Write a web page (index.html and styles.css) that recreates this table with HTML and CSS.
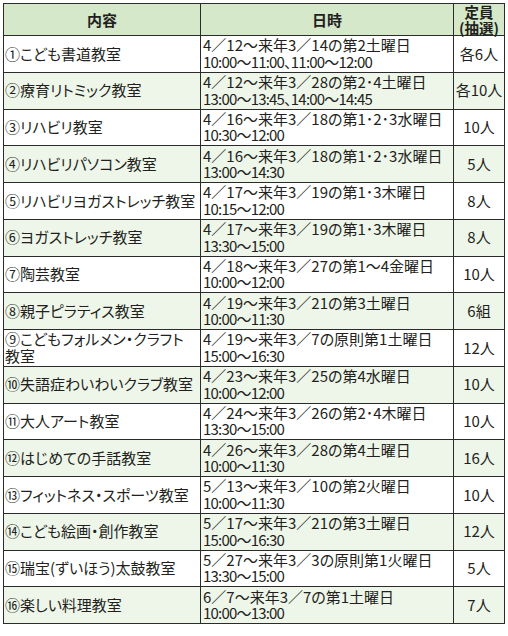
FILE: index.html
```html
<!DOCTYPE html>
<html lang="ja">
<head>
<meta charset="utf-8">
<link rel="stylesheet" href="styles.css">
</head>
<body>
<table class="sched">
  <colgroup>
    <col class="c-name">
    <col class="c-date">
    <col class="c-cap">
  </colgroup>
  <thead>
    <tr>
      <th>内容</th>
      <th>日時</th>
      <th class="cap-h">定員<br>(抽選)</th>
    </tr>
  </thead>
  <tbody>
    <tr><td class="name">①こども書道教室</td><td class="date">4／12～来年3／14の第2土曜日<br><span class="time">10:00～11:00、11:00～12:00</span></td><td class="cap">各6人</td></tr>
    <tr class="alt"><td class="name">②療育リトミック教室</td><td class="date">4／12～来年3／28の第2･4土曜日<br><span class="time">13:00～13:45、14:00～14:45</span></td><td class="cap">各10人</td></tr>
    <tr><td class="name">③リハビリ教室</td><td class="date">4／16～来年3／18の第1･2･3水曜日<br><span class="time">10:30～12:00</span></td><td class="cap">10人</td></tr>
    <tr class="alt"><td class="name">④リハビリパソコン教室</td><td class="date">4／16～来年3／18の第1･2･3水曜日<br><span class="time">13:00～14:30</span></td><td class="cap">5人</td></tr>
    <tr><td class="name">⑤リハビリヨガストレッチ教室</td><td class="date">4／17～来年3／19の第1･3木曜日<br><span class="time">10:15～12:00</span></td><td class="cap">8人</td></tr>
    <tr class="alt"><td class="name">⑥ヨガストレッチ教室</td><td class="date">4／17～来年3／19の第1･3木曜日<br><span class="time">13:30～15:00</span></td><td class="cap">8人</td></tr>
    <tr><td class="name">⑦陶芸教室</td><td class="date">4／18～来年3／27の第1～4金曜日<br><span class="time">10:00～12:00</span></td><td class="cap">10人</td></tr>
    <tr class="alt"><td class="name">⑧親子ピラティス教室</td><td class="date">4／19～来年3／21の第3土曜日<br><span class="time">10:00～11:30</span></td><td class="cap">6組</td></tr>
    <tr><td class="name">⑨こどもフォルメン・クラフト<br>教室</td><td class="date">4／19～来年3／7の原則第1土曜日<br><span class="time">15:00～16:30</span></td><td class="cap">12人</td></tr>
    <tr class="alt"><td class="name">⑩失語症わいわいクラブ教室</td><td class="date">4／23～来年3／25の第4水曜日<br><span class="time">10:00～12:00</span></td><td class="cap">10人</td></tr>
    <tr><td class="name">⑪大人アート教室</td><td class="date">4／24～来年3／26の第2･4木曜日<br><span class="time">13:30～15:00</span></td><td class="cap">10人</td></tr>
    <tr class="alt"><td class="name">⑫はじめての手話教室</td><td class="date">4／26～来年3／28の第4土曜日<br><span class="time">10:00～11:30</span></td><td class="cap">16人</td></tr>
    <tr><td class="name">⑬フィットネス・スポーツ教室</td><td class="date">5／13～来年3／10の第2火曜日<br><span class="time">10:00～11:30</span></td><td class="cap">10人</td></tr>
    <tr class="alt"><td class="name">⑭こども絵画・創作教室</td><td class="date">5／17～来年3／21の第3土曜日<br><span class="time">15:00～16:30</span></td><td class="cap">12人</td></tr>
    <tr><td class="name">⑮瑞宝(ずいほう)太鼓教室</td><td class="date">5／27～来年3／3の原則第1火曜日<br><span class="time">13:30～15:00</span></td><td class="cap">5人</td></tr>
    <tr class="alt"><td class="name">⑯楽しい料理教室</td><td class="date">6／7～来年3／7の第1土曜日<br><span class="time">10:00～13:00</span></td><td class="cap">7人</td></tr>
  </tbody>
</table>
</body>
</html>
```

FILE: styles.css
```css
html, body {
  margin: 0;
  padding: 0;
  background: #ffffff;
}

body {
  padding: 3px 0 0 3px;
  font-family: "Noto Sans CJK JP", "Noto Sans", sans-serif;
  color: #231f20;
}

.sched {
  border-collapse: collapse;
  table-layout: fixed;
  width: 501px;
  font-size: 15px;
  font-feature-settings: "palt";
}

.c-name { width: 197px; }
.c-date { width: 253px; }
.c-cap { width: 51px; }

.sched th,
.sched td {
  border: 1px solid #2b2b2b;
  padding: 0;
}

.sched th {
  background: #d5e8c9;
  height: 31px;
  font-weight: bold;
  font-size: 15px;
  line-height: 16px;
  text-align: center;
  vertical-align: middle;
}

.sched th.cap-h {
  font-size: 14.5px;
  line-height: 15.5px;
}

.sched td {
  height: 35.75px;
  line-height: 16.4px;
  vertical-align: middle;
}

.sched tr.alt td {
  background: #eef6ea;
}

.name {
  padding-left: 1px !important;
  white-space: nowrap;
  overflow: hidden;
}

.date {
  padding-left: 2px !important;
  white-space: nowrap;
  overflow: hidden;
}

.time {
  letter-spacing: -0.8px;
}

.cap {
  text-align: center;
}
```
